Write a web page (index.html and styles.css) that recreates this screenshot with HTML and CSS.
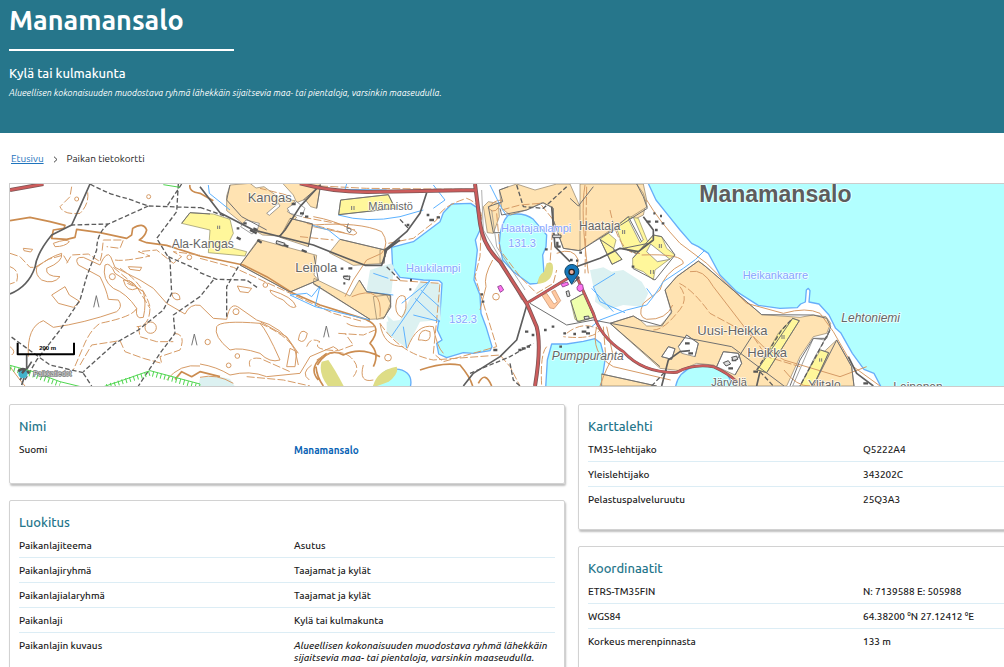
FILE: index.html
```html
<!DOCTYPE html>
<html lang="fi">
<head>
<meta charset="utf-8">
<meta name="viewport" content="width=device-width, initial-scale=1">
<title>Manamansalo – Paikan tietokortti</title>
<link rel="stylesheet" href="styles.css">
</head>
<body>
<header class="hero">
  <h1 class="hero-title">Manamansalo</h1>
  <hr class="hero-rule">
  <p class="hero-type">Kylä tai kulmakunta</p>
  <p class="hero-desc">Alueellisen kokonaisuuden muodostava ryhmä lähekkäin sijaitsevia maa- tai pientaloja, varsinkin maaseudulla.</p>
</header>

<nav class="crumbs" aria-label="Murupolku">
  <a class="crumb-link" href="#">Etusivu</a>
  <svg class="crumb-sep" viewBox="0 0 5 7" aria-hidden="true"><path d="M1 .7 4 3.5 1 6.3"/></svg>
  <span>Paikan tietokortti</span>
</nav>

<main class="content">
<div class="map">
<svg class="map-svg" viewBox="30 12 2982 606" preserveAspectRatio="xMinYMid slice" role="img" aria-label="Kartta: Manamansalo">
  <!-- water, fields and wetlands -->
  <g class="water">
    <path d="M1940 0 1968 60 2000 100 2040 150 2075 190 2095 200 2125 220 2160 285 2210 335 2275 376 2340 385 2392 383 2402 372 2416 366 2419 330 2425 325 2430 332 2427 366 2457 372 2487 405 2507 445 2522 458 2540 490 2557 520 2592 568 2622 580 2648 630 3020 630 3020 0Z"/>
    <g transform="translate(1140)">
      <path d="M35 202 100 185 180 125 190 98 215 72 272 70 290 82 300 150 286 180 292 210 282 300 300 345 303 400 318 440 336 500 330 512 280 520 250 518 200 533 176 522 170 490 186 480 172 450 180 400 186 310 178 302 130 300 60 292 38 262Z"/>
      <path d="M385 105Q430 95 460 118L500 165 498 200 488 225 492 280 472 310 450 312 400 275 368 240 358 190Q360 130 385 105Z"/>
      <path d="M515 492 560 492 610 484 645 476 662 490 675 540 660 640H496L502 540Z"/>
    </g>
    <path d="M2025 640Q2025 580 2080 560 2140 550 2180 580L2215 640Z"/>
    <path d="M1118 630Q1130 590 1160 572 1200 560 1222 580 1240 598 1228 630Z"/>
  </g>
  <g class="wet">
    <path d="M600 595Q640 582 690 597L718 640H590Z"/>
    <path d="M1110 270 1175 250 1182 262 1174 340 1150 345 1100 330Z"/>
    <path d="M1160 405 1200 440 1200 490 1178 470Z"/>
    <path d="M1235 345 1260 305 1320 310 1322 420 1260 425 1220 505 1160 460 1160 425 1200 420Z"/>
    <path d="M1775 270 1810 262 1835 275 1870 270 1925 305 1945 340 1925 380 1870 375 1820 390 1785 365 1790 320Z"/>
    <path d="M1770 270 1798 268 1800 350 1780 320Z"/>
  </g>
  <g class="field">
    <g transform="translate(600)">
      <path d="M90 15 150 10 168 24 192 20 240 55 285 62 262 95 290 112 238 168 188 165 130 132 80 92 80 48Z"/>
      <path d="M248 10H362L350 85 332 80 315 58 290 68 280 45Z"/>
      <path d="M270 115 338 132 325 200 240 172Z"/>
      <path d="M175 178 350 226 342 285 355 300 270 336 120 255Z"/>
      <path d="M342 295 450 348 478 300 500 335 570 346 572 380 550 416 510 418 340 312Z"/>
      <path d="M420 178 555 210 552 250 460 256 388 218Z"/>
    </g>
    <g transform="translate(1140)">
      <path d="M310 80 325 65 355 70 358 110 340 160 322 158Z"/>
      <path d="M358 30 380 22 410 12 465 30 530 12H570L600 80 620 60 640 12H790L800 60 790 105 740 130 620 195 595 212 550 205 520 120 515 80 485 68 440 90 390 105 365 85Z"/>
      <path class="olive" d="M500 250Q524 240 518 275 512 308 472 312 475 285 492 275Z"/>
      <path d="M0 210 20 205 12 245 0 250Z"/>
      <path d="M-20 350 20 345 32 370 15 410-10 418Z"/>
    </g>
    <g transform="translate(1740)">
      <path d="M0 12H170L190 40 202 80 110 138 0 212Z"/>
      <path d="M355 243 375 258 545 404 660 412 700 405 738 410 752 430 740 460 700 470 660 530 620 618H470L455 590 400 555 350 550 300 572 240 565 90 430 160 408 180 420 200 438 240 438 275 400 255 330 290 290Z"/>
      <path d="M65 582 230 618H65Z"/>
      <path d="M770 480 815 560 822 618H660L700 545Z"/>
    </g>
  </g>
  <g class="yellow">
    <path d="M545 130 570 98 640 102 690 118 700 160 680 200 740 215 735 228 625 218 630 150Z"/>
    <path d="M1022 60 1165 44 1185 85 1016 104Z"/>
    <path d="M1848 140 1885 110 1915 115 1945 190 1910 220 1870 205Z"/>
    <path d="M1800 178 1825 160 1848 180 1840 210 1866 238 1836 253Z"/>
    <path d="M1898 235 1960 165 1985 170 2000 205 2025 225 1965 270 1960 300 1930 275 1898 262Z"/>
    <path d="M2378 415 2398 422 2300 578 2272 570 2335 460Z"/>
    <path d="M2462 510 2486 518 2440 618H2400L2440 545Z"/>
    <path class="lime" d="M1712 362 1752 340 1782 412 1740 425 1725 418Z"/>
    <path class="olive" d="M965 545 985 540Q1006 570 1032 620H985Q954 580 965 545Z"/>
    <path class="olive" d="M1118 622Q1130 570 1190 560 1198 580 1166 605L1140 615Z"/>
  </g>
  <g class="open">
    <path d="M1885 118 1900 112 1930 180 1920 188Z"/>
    <path d="M1940 215 1952 192 2010 238 1972 245Z"/>
    <path d="M2035 500 2060 465 2095 490 2085 530 2045 520Z"/>
    <path d="M2150 560 2170 515 2215 520 2225 550 2205 585Z"/>
    <path d="M1985 530 2005 500 2025 506 2015 538Z"/>
    <path d="M2378 618 2440 475 2475 480 2488 455 2445 530 2400 618Z"/>
    <path d="M862 85 890 65 915 85 905 110 870 100Z"/>
    <path d="M800 100 835 70 840 78 808 106Z"/>
    <path d="M722 140 738 120 778 130 772 150 756 162Z"/>
    <path class="orange" d="M1625 345 1640 340 1662 372 1672 366 1655 335 1665 330 1682 362 1662 386 1650 384Z"/>
  </g>

  <!-- contour lines -->
  <g class="contour bold">
    <path d="M30 122 90 112 150 125 195 136 192 145 160 150 155 175 200 178 225 172 230 148 300 158 380 175 395 165 398 145Q430 125 440 150 435 170 418 180L440 188 500 196 600 228 730 255 800 290 880 340 960 375 1040 400 1110 422"/>
    <path d="M570 15Q565 35 600 40L640 62M525 598 545 575 575 590 600 575 660 590"/>
    <path d="M1100 420Q1150 440 1110 490 1140 520 1120 560M952 555Q985 500 1030 525 1080 500 1140 530"/>
    <path d="M948 560Q950 590 970 618M980 520Q920 560 955 600M1260 570Q1330 545 1380 555 1410 590 1418 618M1435 610Q1455 570 1475 618"/>
  </g>
  <g class="contour">
    <path d="M85 530Q80 440 130 422L160 442Q250 430 350 395 370 380 355 360L325 358Q320 330 300 290L235 255Q220 230 250 232L300 255Q320 210 332 230L345 262 420 300 460 325 500 370 555 402Q570 370 600 376L640 415 680 418Q690 360 720 385L770 420Q850 440 885 510L895 555"/>
    <path d="M110 262Q150 230 185 220 190 245 140 265 135 290 180 290 160 315 125 300 105 285 110 262ZM155 345 195 320 208 345 240 365 220 382 175 370ZM315 255Q330 245 345 280L430 335Q440 370 430 412 405 420 410 385 380 340 340 325 305 300 315 255ZM370 300Q400 300 412 325 380 340 370 300ZM382 310 400 318"/>
    <circle cx="452" cy="443" r="17"/><circle cx="337" cy="290" r="9"/><circle cx="230" cy="57" r="6"/><circle cx="446" cy="50" r="6"/><circle cx="568" cy="232" r="7"/><circle cx="623" cy="486" r="8"/><circle cx="1164" cy="533" r="10"/><circle cx="1488" cy="350" r="10"/><circle cx="686" cy="556" r="7"/><circle cx="712" cy="528" r="7"/><circle cx="708" cy="395" r="9"/><circle cx="796" cy="315" r="7"/>
    <path d="M515 340Q540 335 540 358 520 365 515 340ZM70 205 98 208 92 216 72 212ZM385 260 425 262 420 272 390 268ZM712 318 755 325 745 338 720 335ZM160 190Q200 175 208 185 195 200 165 200Z"/>
    <path d="M650 440Q660 420 780 430 800 450 840 540 810 550 780 520 720 500 690 510 640 470 650 440ZM782 426 860 470 895 520M860 560 870 505 890 515 885 560ZM810 330Q880 350 888 380 875 390 850 360 810 345 810 330ZM895 480Q900 440 922 460 915 495 895 480Z"/>
    <path d="M600 552Q650 560 690 585 750 570 800 590L900 580 930 530 1000 500 1015 510M600 592Q650 580 700 610M928 600Q900 580 935 555M1090 555Q1075 610 1120 600M1040 430Q1060 445 1125 440M1190 360Q1200 340 1215 350 1225 390 1205 412 1180 400 1190 360ZM1255 480Q1260 440 1290 455 1295 490 1265 480ZM1140 430Q1150 500 1210 500M1222 505Q1250 430 1300 440 1310 500 1330 520"/>
    <path d="M940 135Q1080 125 1145 155 1170 190 1145 220L1100 240 1060 300 1035 350M1055 350Q1150 310 1140 410M940 110Q1000 120 1060 150 1080 160 1060 165L940 140M1478 240Q1450 290 1458 320L1440 390"/>
    <path d="M1940 60Q1975 120 2040 190L2120 250 2240 370 2350 400Q2420 380 2460 400L2500 455 2560 560 2640 618M2070 275Q2110 265 2140 320L2240 450 2290 500 2352 540 2520 590 2600 560"/>
    <path d="M1925 225Q2050 220 2050 250 1990 280 1980 330L1930 370Q1910 410 1940 418 2000 420 2018 375M1755 15Q1740 100 1765 280M1820 440 1840 530Q1820 560 1800 618M1790 440Q1770 520 1840 560L2012 600M2352 570Q2390 620 2430 618M1670 220Q1720 200 1735 240 1730 280 1700 295"/>
    <path d="M1505 60Q1490 110 1465 85 1480 60 1505 60ZM30 500Q50 515 35 525M30 560 60 600 75 618M500 600Q540 550 600 558"/>
  </g>
  <g class="contour dash">
    <path d="M215 20 210 50 180 80Q190 105 240 100 270 70 262 30M30 220 60 230 90 262 105 262 145 238 190 225 205 250M200 250 215 225 265 222 300 245 305 225 310 180 370 180 360 205 320 200M345 240Q370 245 450 228L415 215 470 210 520 250 545 230 520 215 600 225"/>
    <path d="M360 265Q430 310 450 380 450 440 410 440M410 385Q400 410 300 430 270 450 250 500L220 570M240 555 275 495 360 482 375 515 430 535 485 550 480 530 540 510Q560 460 520 460M415 440 420 470 470 485 520 485M30 260Q60 270 50 305L30 312"/>
    <path d="M340 262 410 320 450 385M600 235 700 262 860 335 1000 400 1090 425M780 430Q850 460 880 500M920 500Q930 470 960 485 930 510 1015 512L1060 495 1035 460M750 560Q740 530 780 535L870 575M740 590 850 600 930 618M1015 460 1090 465 1125 450M950 540Q1010 500 1050 530 1085 560 1060 590M1140 430Q1200 520 1300 540L1500 525 1530 560 1560 618"/>
    <path d="M910 112 1010 130 1065 150M920 130 1040 160M900 170 1000 180M860 45 780 25M960 18 1100 25 1410 28M1165 190 1240 175 1310 120Q1320 80 1400 55 1440 70 1445 110L1440 230 1425 290 1450 370 1490 500 1330 545 1300 520 1310 420 1320 310 1170 300"/>
    <path d="M1490 100 1500 210 1560 290 1610 340 1660 310 1670 270M1505 90 1560 75 1620 70 1660 120 1650 250M1760 20 1755 280M2038 310Q2080 330 2130 400L2260 470 2300 530 2400 560M2040 320Q2070 360 2030 400 1990 450 1960 450M1830 90Q1860 230 1920 220M1810 440 1818 540M1640 500Q1620 520 1625 618M1700 460Q1750 420 1800 450 1780 480 1690 470"/>
  </g>

  <!-- streams and shorelines -->
  <g class="stream">
    <path d="M625 15 628 40 690 90M1040 12 1035 28 1160 30M935 135 985 150 1020 178M870 345 920 340 935 350 960 318 945 380 1110 420M945 380 870 345M1015 105Q1100 130 1200 110L1270 90M1300 15 1335 60 1300 85M1470 15 1505 85 1520 108M1165 295 1120 280"/>
    <path d="M1180 345 1100 335M1175 468 1290 302M1240 405 1320 425 1245 355M1262 330 1318 380M1205 370 1290 302M1220 505 1210 440"/>
    <path d="M2115 210Q2090 240 2050 265L1990 305 1960 350 1940 375 1880 390 1800 420 1775 440M1845 280 1780 320 1800 365 1875 398M1775 325 1840 395M1940 325 1958 350"/>
  </g>

  <!-- tracks, boundaries and roads -->
  <g class="track">
    <path d="M270 12Q330 45 380 55L445 78 600 83M445 78 325 132 215 135M325 132Q290 160 290 210L260 290 240 360 180 450 110 540 75 600M545 12 500 80M535 12 530 95 470 175 510 240 515 340 490 390 415 450 345 490 250 575M250 578 150 555 30 468M505 230 600 272M600 350 520 405 525 460 480 520 415 618M600 278 650 298 740 300 775 325M640 300 600 350M715 260 680 320 680 410M600 82 680 110M250 580 275 618"/>
    <path d="M1200 118 1225 145M1160 260 1200 300M1410 580 1530 530 1600 490M1530 550 1540 600 1560 618M1550 15 1570 80 1630 85 1700 20M1955 618 2000 570M2270 570 2345 450 2378 415M2490 450 2400 618M2280 575 2320 618"/>
  </g>
  <g class="edge">
    <path d="M690 15 680 60 725 110 800 150M778 178 720 255 870 336 955 300 942 226M1020 178 1155 210 1152 250M1078 300 1100 335 1172 346 1172 382 1150 416M940 310 1110 418M1022 60 1165 44 1185 85 1016 104ZM545 130 570 98 630 102"/>
    <path d="M910 60 962 15 950 85M870 115 938 132 925 200M1498 30 1508 65 1465 80 1480 158 1500 158M1498 30 1525 20M1500 85 1505 105 1580 90 1630 68 1660 85 1660 120 1690 205 1740 212 1942 85 1930 50 1910 12M1710 55 1735 78 1780 20"/>
    <path d="M1830 430 1980 560M1830 430 1900 408 1920 420 1985 438 2015 395 1995 330 2030 290 2095 243 2115 258 2285 404 2440 405 2480 415 2492 440 2480 475 2440 475 2400 540 2370 618M2510 480 2555 560 2562 618M2510 480 2440 618M2378 415 2398 422 2300 578 2272 570ZM2462 510 2486 518 2440 618M1805 582 1970 618M1780 420 2195 500 2352 618M2255 470 2210 540"/>
    <path d="M1848 140 1885 110 1925 185M1945 190 1910 220 1870 205ZM1800 178 1836 253 1866 238 1840 205ZM1898 235 1960 165 1985 170 2025 225 1965 300 1898 265M2035 500 2060 465 2095 490 2085 530M2150 560 2170 515 2215 520 2225 550 2205 585M1985 530 2005 500 2025 506 2015 538ZM1712 362 1752 340 1782 412 1732 425ZM1590 370 1700 435 1780 420"/>
  </g>
  <g class="road">
    <path d="M270 12 240 80 215 135 155 165Q110 220 105 262 85 320 30 342M600 20 660 98 760 150 940 195 1040 235 1095 256 1145 256 1160 210 1200 180M960 15 900 80 855 150 838 170M1280 38 1260 100 1220 155 1155 210 1155 230M1582 370 1550 480 1500 530 1420 580 1390 618M1655 80 1665 200 1710 245M1708 268 1800 235 1860 205 1915 215 1960 180 1960 150 1930 110M1985 618 2005 540 2040 515 2070 512M60 600 95 545M2280 575 2270 618M2545 530 2570 580 2620 618M80 525V570L65 615"/>
    <path d="M1445 30 1450 150 1510 250 1565 360M1475 90 1490 200 1575 330" class="thin"/>
  </g>
  <g class="main-road">
    <path class="case" d="M900 10Q990 35 1100 36L1425 30M1425 12 1440 130Q1450 200 1500 245L1580 370 1610 440Q1625 500 1605 618M30 30 130 12"/>
    <path class="case minor" d="M1580 370 1720 285M1730 290 1780 400Q1800 470 1870 515 1930 580 2030 577 2080 550 2140 560 2185 580 2210 605"/>
    <path class="core" d="M900 10Q990 35 1100 36L1425 30M1425 12 1440 130Q1450 200 1500 245L1580 370 1610 440Q1625 500 1605 618M30 30 130 12"/>
    <path class="core minor" d="M1580 370 1720 285M1730 290 1780 400Q1800 470 1870 515 1930 580 2030 577 2080 550 2140 560 2185 580 2210 605"/>
  </g>

  <!-- protected area edge and buildings -->
  <path class="green" d="M30 556 100 575 180 605 250 622M305 622 370 600 450 572 600 612M490 14 540 22"/>
  <path class="hatch" d="M30 565 100 585 180 613M320 620 450 580 600 620"/>
  <path class="building" d="M730 130h10M750 150 770 160M760 145 772 150M710 145h8M710 172 722 178M772 180 785 188M830 186 865 200M905 210 920 216M875 72h12M900 100h12M915 110h10M1030 290h14M1045 265h12M1022 266h8M1030 310h6M1280 105h8M1288 120h14M1310 112h10M1220 135h8M1230 300h6M1228 328h6M1442 343h7M1445 365h8M1480 510h12M1575 455h10M1595 465h8M1565 505h12M1580 500h10M1555 510h8M1632 450h8M1655 440h8M1690 460h8M1720 462h8M1758 460h12M1678 500h8M1672 185V200H1682M1710 240h8M1728 242h6M1635 208h8M1738 218h8M1940 125h12M1965 125h10M1985 130h8M1980 108h6M1960 100h6M1965 150h8M1745 455h14M1760 442h8M2055 490h14M2065 520h14M2185 565h14M2195 540h14M2260 575h14M2590 610h14M1895 260h8"/>
  <path class="house" d="M2170 548 2185 542 2192 552 2178 558ZM2195 532 2210 528 2213 538 2200 542ZM1658 165H1683V173H1658ZM830 182 855 190 850 198 828 190ZM1030 290 1050 288 1048 300 1032 296ZM1752 410 1766 408 1768 416 1754 418ZM1698 335 1706 332 1710 348 1702 350Z"/>
  <path class="pink" d="M1493 320 1503 316 1511 330 1501 337ZM1683 312 1702 306 1706 314 1688 321ZM1731 322 1738 312 1748 314 1750 328 1740 335 1732 330Z"/>
  <path class="mark" d="M281 382 289 347 297 382M575 496 583 462 591 496M971 472 979 438 987 472M653 137V147M659 137V147M1055 78V90M1062 78V90M1868 150V162M1874 150V162M1978 192V204M1984 192V204M1952 270V282M1960 270V282M2346 465V477M2352 465V477M2459 535V545M2465 535V545M1045 130Q1035 155 1050 158 1060 145 1042 145"/>

  <!-- place names -->
  <g class="names">
    <text x="743" y="66" class="n13">Kangas</text>
    <text x="515" y="203" class="n12">Ala-Kangas</text>
    <text x="886" y="275" class="n13">Leinola</text>
    <text x="1105" y="90" class="n11">Männistö</text>
    <text x="1737" y="150" class="n12">Haataja</text>
    <text x="2092" y="465" class="n13">Uusi-Heikka</text>
    <text x="2242" y="532" class="n13">Heikka</text>
    <text x="2134" y="618" class="n11">Järvelä</text>
    <text x="2424" y="626" class="n12">Ylitalo</text>
    <text x="2680" y="633" class="n12">Leinonen</text>
    <text x="1655" y="540" class="n12 cape">Pumppuranta</text>
    <text x="2524" y="427" class="n12 cape">Lehtoniemi</text>
    <text x="2098" y="67" class="town">Manamansalo</text>
  </g>
  <g class="names lake">
    <text x="1218" y="275" class="n11">Haukilampi</text>
    <text x="1348" y="429" class="n11">132.3</text>
    <text x="1503" y="156" class="n11">Haatajanlampi</text>
    <text x="1525" y="200" class="n11">131.3</text>
    <text x="2228" y="298" class="n11">Heikankaarre</text>
  </g>

  <!-- marker, scale bar and attribution -->
  <path class="pin-shadow" d="M1716 314 1736 288 1740 294Z"/>
  <path class="pin" d="M1715 313Q1706 297 1698 286A21 21 0 1 1 1733 286Q1724 297 1715 313Z"/>
  <circle class="pin-dot" cx="1715" cy="276" r="8"/>
  <path class="scale" d="M53 488V523H222V488"/>
  <text class="scale-text" x="143" y="511">200 m</text>
  <circle class="logo" cx="69" cy="581" r="14"/>
  <path class="logo-ring" d="M55 575Q62 564 76 568L66 580M82 572 86 580"/>
  <text class="credit" x="100" y="587">Paikkatiedot</text>
</svg>
</div>

<div class="cards">
  <div class="column">
    <section class="card">
      <h2 class="card-title">Nimi</h2>
      <table class="facts">
        <tr><th scope="row">Suomi</th><td class="place-name">Manamansalo</td></tr>
      </table>
    </section>
    <section class="card">
      <h2 class="card-title">Luokitus</h2>
      <table class="facts">
        <tr><th scope="row">Paikanlajiteema</th><td>Asutus</td></tr>
        <tr><th scope="row">Paikanlajiryhmä</th><td>Taajamat ja kylät</td></tr>
        <tr><th scope="row">Paikanlajialaryhmä</th><td>Taajamat ja kylät</td></tr>
        <tr><th scope="row">Paikanlaji</th><td>Kylä tai kulmakunta</td></tr>
        <tr><th scope="row">Paikanlajin kuvaus</th><td class="describe">Alueellisen kokonaisuuden muodostava ryhmä lähekkäin sijaitsevia maa- tai pientaloja, varsinkin maaseudulla.</td></tr>
      </table>
    </section>
  </div>
  <div class="column">
    <section class="card">
      <h2 class="card-title">Karttalehti</h2>
      <table class="facts">
        <tr><th scope="row">TM35-lehtijako</th><td>Q5222A4</td></tr>
        <tr><th scope="row">Yleislehtijako</th><td>343202C</td></tr>
        <tr><th scope="row">Pelastuspalveluruutu</th><td>25Q3A3</td></tr>
      </table>
    </section>
    <section class="card">
      <h2 class="card-title">Koordinaatit</h2>
      <table class="facts">
        <tr><th scope="row">ETRS-TM35FIN</th><td>N: 7139588 E: 505988</td></tr>
        <tr><th scope="row">WGS84</th><td>64.38200 ⁰N 27.12412 ⁰E</td></tr>
        <tr><th scope="row">Korkeus merenpinnasta</th><td>133 m</td></tr>
      </table>
    </section>
  </div>
</div>
</main>
</body>
</html>
```
FILE: styles.css
```css
* { box-sizing: border-box; }
html { overflow: hidden; }
body {
  margin: 0;
  background: #fff;
  color: #1c1c1c;
  font: 10px/12px "Ubuntu", "Noto Sans", "Open Sans", sans-serif;
}
h1, h2, p { margin: 0; }

.hero {
  height: 133px;
  padding: 4px 9px 0;
  background: #26768b;
  color: #fff;
}
.hero-title { font-size: 27px; line-height: 32px; font-weight: 700; }
.hero-rule {
  width: 225px;
  height: 2px;
  margin: 13px 0;
  border: 0;
  background: #fff;
}
.hero-type { font-size: 13px; line-height: 18px; font-weight: 500; }
.hero-desc { margin-top: 4px; font-size: 9px; line-height: 14px; font-style: italic; font-weight: 400; }

.crumbs {
  display: flex;
  align-items: center;
  gap: 9px;
  height: 50px;
  padding: 2px 0 0 11px;
}
.crumb-link { color: #1f74bd; }
.crumb-sep { width: 5px; height: 7px; fill: none; stroke: #444; }

.content { padding-left: 9px; overflow: hidden; }
.map { border: 1px solid #ccc; border-right: 0; }
.map-svg { display: block; width: 100%; height: 202px; fill: none; stroke-linejoin: round; }

.water path { fill: #b2ffff; stroke: #66aefa; stroke-width: 4; }
.wet { fill: #dcf1f1; }
.field { fill: #ffe3b2; stroke: #8b7b63; stroke-width: 2; }
.yellow { fill: #fff79b; stroke: #8d8a60; stroke-width: 2; }
.olive { fill: #dedd86; stroke: none; }
.lime { fill: #efffad; }
.open { fill: #fff; stroke: #707070; stroke-width: 2; }
.orange { fill: #ffc9a1; stroke: #c98b62; }
.contour { stroke: #d69b66; stroke-width: 3; }
.contour.bold { stroke: #cb8c50; stroke-width: 5; }
.contour.dash { stroke-dasharray: 24 7; }
.stream { stroke: #5cb2ff; stroke-width: 3; }
.track { stroke: #5c5c5c; stroke-width: 4; stroke-dasharray: 14 7; }
.edge { stroke: #707070; stroke-width: 3; }
.road { stroke: #5e5e5e; stroke-width: 5; }
.thin { stroke: #888; stroke-width: 2; }
.case { stroke: #7e5656; stroke-width: 12; }
.core { stroke: #cd5c5c; stroke-width: 7; }
.case.minor { stroke-width: 9; }
.core.minor { stroke-width: 6; }
.green { stroke: #50d650; stroke-width: 3; }
.hatch { stroke: #50d650; stroke-width: 15; stroke-dasharray: 3 9; }
.building { stroke: #555; stroke-width: 7; }
.house { fill: #ddd; stroke: #555; stroke-width: 3; }
.pink { fill: #ff72f0; stroke: #9b4f9b; stroke-width: 3; }
.mark { stroke: #777; stroke-width: 3; }

.names {
  fill: #666;
  stroke: #fff;
  stroke-opacity: .75;
  stroke-width: 5;
  paint-order: stroke;
  font-family: "Liberation Sans", Arial, sans-serif;
}
.names.lake { fill: #86a4ff; }
.n11 { font-size: 33px; }
.n12 { font-size: 36px; }
.n13 { font-size: 39px; }
.cape { font-style: italic; }
.town { font-size: 69px; font-weight: 700; fill: #5d5d5d; }

.pin { fill: #1577ba; stroke: #0b4468; stroke-width: 3; }
.pin-shadow { fill: #555; }
.pin-dot { fill: #e9b0a0; stroke: #222; stroke-width: 4; }
.scale { stroke: #000; stroke-width: 6; }
.scale-text { fill: #000; font: 700 18px "Liberation Sans", sans-serif; text-anchor: middle; }
.logo { fill: #42b4cc; }
.logo-ring { stroke: #555; stroke-width: 7; }
.credit { fill: #ddd; stroke: #777; stroke-width: 4; paint-order: stroke; font: 21px "Liberation Sans", sans-serif; }

.cards {
  display: grid;
  grid-template-columns: 1fr 1fr;
  gap: 13px;
  width: calc(100% + 130px);
  margin-top: 17px;
}
.column { display: flex; flex-direction: column; gap: 16px; }
.card {
  padding: 12px 9px 18px;
  border: 1px solid #d2d2d2;
  border-radius: 2px;
  box-shadow: 1px 2px 2px rgba(0, 0, 0, .25);
}
.card-title { color: #26768b; font-size: 13px; line-height: 19px; font-weight: 500; }
.facts { width: 100%; table-layout: fixed; border-collapse: separate; border-spacing: 0; }
.facts th, .facts td {
  padding: 7px 0 5px;
  border-top: 1px solid transparent;
  font-weight: 500;
  text-align: left;
  vertical-align: top;
}
.facts th { width: 275px; }
.facts tr + tr > * { border-top-color: #dcedf5; }
.facts .place-name { padding: 8px 0; color: #0b64b5; font-weight: 700; }
.facts .describe { font-style: italic; }
```
